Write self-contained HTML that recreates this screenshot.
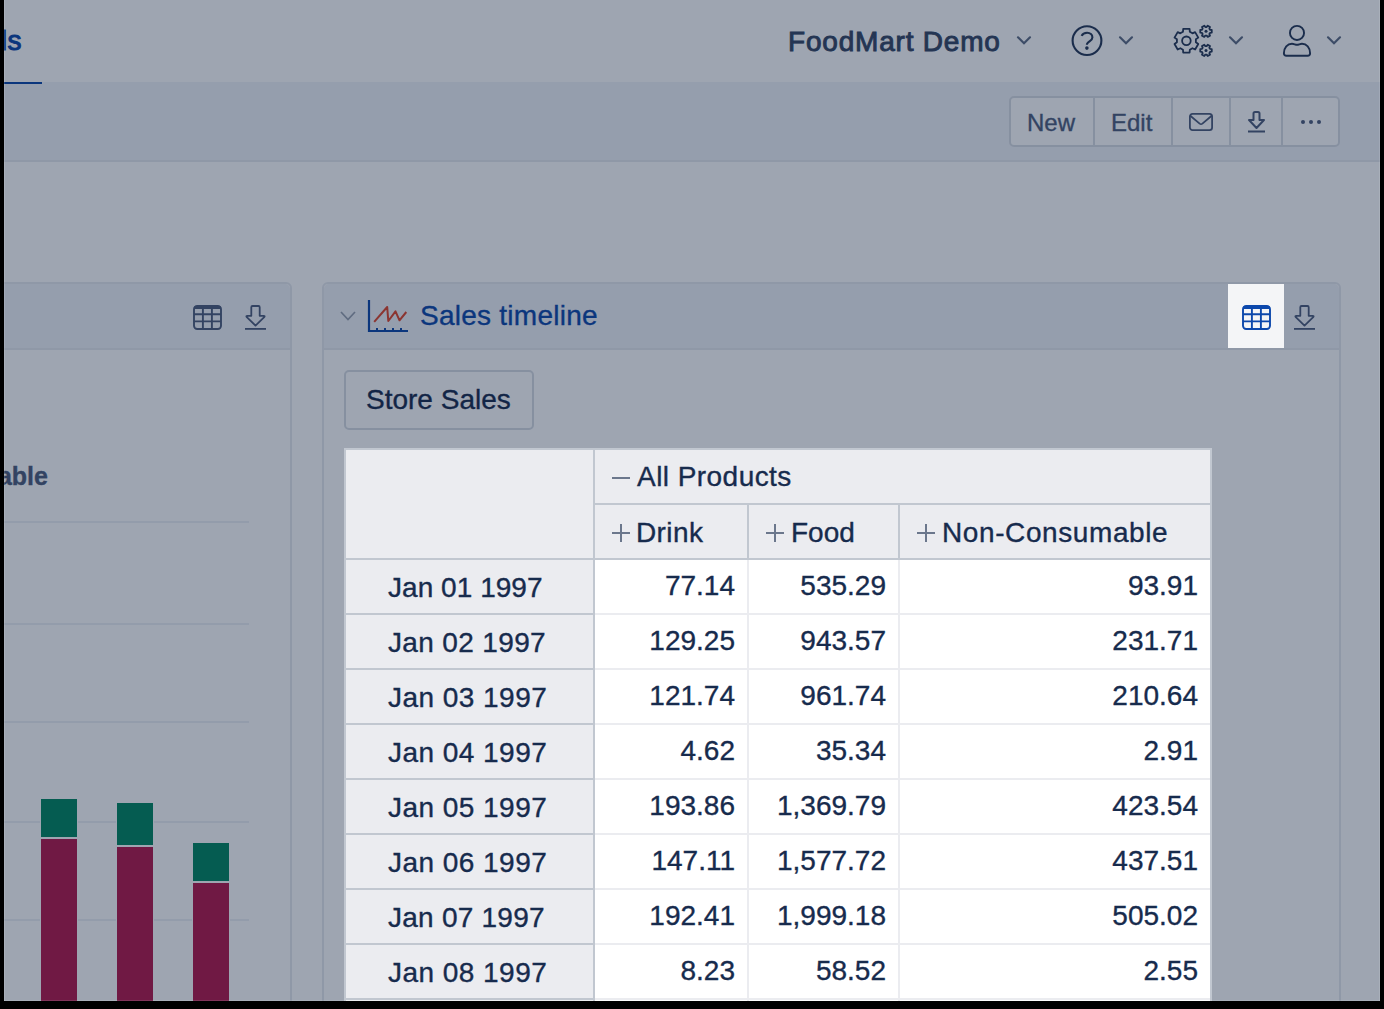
<!DOCTYPE html>
<html><head><meta charset="utf-8">
<style>
*{box-sizing:border-box;margin:0;padding:0}
html,body{width:1384px;height:1009px;overflow:hidden;background:#fff}
body{font-family:"Liberation Sans",sans-serif;color:#172B4D;position:relative}
.abs{position:absolute}
.ov{position:absolute;background:rgba(13,30,60,0.4)}
.t{position:absolute;white-space:nowrap;line-height:1;-webkit-text-stroke:0.35px currentColor}
svg{position:absolute;overflow:visible}
.btn{position:absolute;top:0;height:49px;border-right:2px solid #D8DCE3}
td,th{font-weight:normal}
</style></head><body>
  <!-- header -->
  <div class="t" style="left:-134px;top:27px;font-size:28px;letter-spacing:0.5px;-webkit-text-stroke:1px currentColor;color:#0A47A8">Dashboards</div>
  <div class="abs" style="left:0;top:82px;width:1384px;height:80px;background:#F1F3F8;border-bottom:2px solid #E6E9EF"></div>
  <div class="abs" style="left:0;top:82px;width:42px;height:2px;background:#0A47A8"></div>

  <div class="t" style="left:788px;top:28px;font-size:28px;letter-spacing:0.8px;-webkit-text-stroke:0.9px currentColor;color:#344563">FoodMart Demo</div>
  <svg style="left:1017px;top:35.6px" width="14" height="9" viewBox="0 0 14 9"><path d="M1 1.3 L7 7.3 L13 1.3" fill="none" stroke="#5E6C84" stroke-width="2.2" stroke-linecap="round"/></svg>

  <!-- help -->
  <svg style="left:1071px;top:25px" width="32" height="32" viewBox="0 0 32 32"><circle cx="16" cy="15.6" r="14.4" fill="none" stroke="#253858" stroke-width="2.1"/><path d="M10.6 10.9 C11.6 8.8 13.6 7.8 16.1 7.8 C19.2 7.8 21.4 9.8 21.4 12.4 C21.4 15.2 18.4 16.1 16.6 18 Q15.9 18.7 15.9 19.8" fill="none" stroke="#253858" stroke-width="2.1"/><circle cx="15.9" cy="23.1" r="1.8" fill="#253858"/></svg>
  <svg style="left:1119px;top:35.6px" width="14" height="9" viewBox="0 0 14 9"><path d="M1 1.3 L7 7.3 L13 1.3" fill="none" stroke="#5E6C84" stroke-width="2.2" stroke-linecap="round"/></svg>

  <!-- gears -->
  <svg style="left:1172px;top:24px" width="42" height="34" viewBox="0 0 42 34"><g fill="none" stroke="#253858" stroke-width="1.8" stroke-linejoin="round"><path d="M17.84 7.84 L17.58 4.92 L11.22 4.92 L10.96 7.84 L8.36 9.34 L5.70 8.10 L2.52 13.62 L4.92 15.30 L4.92 18.30 L2.52 19.98 L5.70 25.50 L8.36 24.26 L10.96 25.76 L11.22 28.68 L17.58 28.68 L17.84 25.76 L20.44 24.26 L23.10 25.50 L26.28 19.98 L23.88 18.30 L23.88 15.30 L26.28 13.62 L23.10 8.10 L20.44 9.34 Z"/><circle cx="14.4" cy="16.8" r="4.3"/><path d="M38.01 8.84 L39.75 8.63 L39.75 5.97 L38.01 5.76 L37.34 4.59 L38.02 2.99 L35.72 1.66 L34.67 3.05 L33.33 3.05 L32.28 1.66 L29.98 2.99 L30.66 4.59 L29.99 5.76 L28.25 5.97 L28.25 8.63 L29.99 8.84 L30.66 10.01 L29.98 11.61 L32.28 12.94 L33.33 11.55 L34.67 11.55 L35.72 12.94 L38.02 11.61 L37.34 10.01 Z"/><path d="M38.01 27.94 L39.75 27.73 L39.75 25.07 L38.01 24.86 L37.34 23.69 L38.02 22.09 L35.72 20.76 L34.67 22.15 L33.33 22.15 L32.28 20.76 L29.98 22.09 L30.66 23.69 L29.99 24.86 L28.25 25.07 L28.25 27.73 L29.99 27.94 L30.66 29.11 L29.98 30.71 L32.28 32.04 L33.33 30.65 L34.67 30.65 L35.72 32.04 L38.02 30.71 L37.34 29.11 Z"/></g><circle cx="34" cy="7.3" r="1.5" fill="#253858"/><circle cx="34" cy="26.4" r="1.5" fill="#253858"/></svg>
  <svg style="left:1229px;top:35.6px" width="14" height="9" viewBox="0 0 14 9"><path d="M1 1.3 L7 7.3 L13 1.3" fill="none" stroke="#5E6C84" stroke-width="2.2" stroke-linecap="round"/></svg>

  <!-- user -->
  <svg style="left:1282px;top:24px" width="30" height="34" viewBox="0 0 30 34"><circle cx="15" cy="8.9" r="7.05" fill="none" stroke="#253858" stroke-width="1.9"/><path d="M1.9 29.3 C1.9 23.5 5.5 19.8 10 19.8 C12 19.8 13.3 20.8 15 20.8 C16.7 20.8 18 19.8 20 19.8 C24.5 19.8 28.1 23.5 28.1 29.3 Q28.1 31.8 25.6 31.8 L4.4 31.8 Q1.9 31.8 1.9 29.3 Z" fill="none" stroke="#253858" stroke-width="1.9"/></svg>
  <svg style="left:1327px;top:35.6px" width="14" height="9" viewBox="0 0 14 9"><path d="M1 1.3 L7 7.3 L13 1.3" fill="none" stroke="#5E6C84" stroke-width="2.2" stroke-linecap="round"/></svg>

  <!-- toolbar -->
  <div class="abs" style="left:1009px;top:96px;width:331px;height:51px;background:#fff;border:2px solid #D8DCE3;border-radius:5px"></div>
  <div class="abs" style="left:1093px;top:97px;width:2px;height:49px;background:#D8DCE3"></div>
  <div class="abs" style="left:1171px;top:97px;width:2px;height:49px;background:#D8DCE3"></div>
  <div class="abs" style="left:1229px;top:97px;width:2px;height:49px;background:#D8DCE3"></div>
  <div class="abs" style="left:1281px;top:97px;width:2px;height:49px;background:#D8DCE3"></div>
  <div class="t" style="left:1027px;top:111px;font-size:24px;color:#4D5D7C">New</div>
  <div class="t" style="left:1111px;top:111px;font-size:24px;color:#4D5D7C">Edit</div>
  <svg style="left:1189px;top:113px" width="24" height="18" viewBox="0 0 24 18"><rect x="0.9" y="0.9" width="22.2" height="16.2" rx="2.6" fill="none" stroke="#4D5D7C" stroke-width="1.8"/><path d="M1.3 2.8 L10.6 10.6 Q12 11.7 13.4 10.6 L22.7 2.8" fill="none" stroke="#4D5D7C" stroke-width="1.8"/></svg>
  <svg style="left:1247px;top:111px" width="19" height="22" viewBox="0 0 19 22" class="dl"><path d="M6.5 9 L6.5 2.5 Q6.5 1 8 1 L11 1 Q12.5 1 12.5 2.5 L12.5 9 L17 9 L9.5 17 L2 9 Z" fill="none" stroke="#4D5D7C" stroke-width="2" stroke-linejoin="round"/><rect x="1" y="19.5" width="17" height="2" fill="#4D5D7C"/></svg>
  <div class="abs" style="left:1300.9px;top:119.7px;width:4.2px;height:4.2px;border-radius:50%;background:#4D5D7C"></div>
  <div class="abs" style="left:1308.9px;top:119.7px;width:4.2px;height:4.2px;border-radius:50%;background:#4D5D7C"></div>
  <div class="abs" style="left:1316.9px;top:119.7px;width:4.2px;height:4.2px;border-radius:50%;background:#4D5D7C"></div>

  <!-- left portlet -->
  <div class="abs" style="left:-20px;top:282px;width:312px;height:760px;border:2px solid #E6E9EF;border-radius:6px;background:#fff"></div>
  <div class="abs" style="left:-18px;top:284px;width:308px;height:66px;background:#F1F3F8;border-bottom:2px solid #E6E9EF;border-top-right-radius:5px"></div>
  <svg style="left:193px;top:305px" width="29" height="25" viewBox="0 0 29 25"><rect x="1" y="1" width="27" height="23" rx="3.2" fill="none" stroke="#4D5D7C" stroke-width="1.9"/><rect x="1.5" y="1" width="26" height="3" fill="#4D5D7C"/><path d="M1 9.2 H28 M1 16.4 H28 M9.9 1 V24 M18.9 1 V24" stroke="#4D5D7C" stroke-width="1.9"/></svg>
  <svg style="left:245px;top:305px" width="21" height="25" viewBox="0 0 21 25"><path d="M6.3 10.8 V2.2 Q6.3 1 7.5 1 H13.5 Q14.7 1 14.7 2.2 V10.8 H18.6 Q20.3 10.8 19.2 12.1 L10.5 20.6 L1.8 12.1 Q0.7 10.8 2.4 10.8 Z" fill="none" stroke="#4D5D7C" stroke-width="1.8" stroke-linejoin="round"/><rect x="0" y="23" width="21" height="1.8" fill="#4D5D7C"/></svg>
  <div class="t" style="left:-159px;top:464px;font-size:25px;font-weight:bold;color:#4D5D7C">Non-Consumable</div>
            <div class="abs" style="left:0;top:521px;width:249px;height:2px;background:#EDF0F5"></div>
  <div class="abs" style="left:0;top:623px;width:249px;height:2px;background:#EDF0F5"></div>
  <div class="abs" style="left:0;top:721px;width:249px;height:2px;background:#EDF0F5"></div>
  <div class="abs" style="left:0;top:821px;width:249px;height:2px;background:#EDF0F5"></div>
  <div class="abs" style="left:0;top:919px;width:249px;height:2px;background:#EDF0F5"></div>
  <!-- bars -->
  <div class="abs" style="left:41px;top:799px;width:36px;height:38px;background:#00855F;box-shadow:0 0 0 1px #fff"></div>
  <div class="abs" style="left:41px;top:839px;width:36px;height:200px;background:#B2164A;box-shadow:0 0 0 1px #fff"></div>
  <div class="abs" style="left:117px;top:803px;width:36px;height:42px;background:#00855F;box-shadow:0 0 0 1px #fff"></div>
  <div class="abs" style="left:117px;top:847px;width:36px;height:200px;background:#B2164A;box-shadow:0 0 0 1px #fff"></div>
  <div class="abs" style="left:193px;top:843px;width:36px;height:38px;background:#00855F;box-shadow:0 0 0 1px #fff"></div>
  <div class="abs" style="left:193px;top:883px;width:36px;height:200px;background:#B2164A;box-shadow:0 0 0 1px #fff"></div>

  <!-- right portlet -->
  <div class="abs" style="left:322px;top:282px;width:1019px;height:760px;border:2px solid #E6E9EF;border-radius:6px;background:#fff"></div>
  <div class="abs" style="left:324px;top:284px;width:1015px;height:66px;background:#F1F3F8;border-bottom:2px solid #E6E9EF;border-top-left-radius:5px;border-top-right-radius:5px"></div>
  <svg style="left:340px;top:311px" width="16" height="10" viewBox="0 0 16 10"><path d="M1 1 L8 8.5 L15 1" fill="none" stroke="#97A0AF" stroke-width="1.7"/></svg>
  <svg style="left:368px;top:300px" width="41" height="33" viewBox="0 0 41 33"><path d="M1 0 V31 H40" fill="none" stroke="#0A47A8" stroke-width="2.2"/><path d="M9 28 V30 M17 28 V30 M25 28 V30 M33 28 V30" stroke="#0A47A8" stroke-width="2"/><path d="M6.2 21.8 L19.2 7 L20.3 21 L27.5 11.3 L31.5 20.3 L38.3 12" fill="none" stroke="#E0452A" stroke-width="2" stroke-linejoin="round"/></svg>
  <div class="t" style="left:420px;top:302px;font-size:28px;letter-spacing:0.25px;color:#0A47A8">Sales timeline</div>
  <div class="abs" style="left:1228px;top:284px;width:56px;height:64px;background:#F4F5F7"></div>
  <svg style="left:1242px;top:305px" width="29" height="25" viewBox="0 0 29 25"><rect x="1" y="1" width="27" height="23" rx="3.2" fill="none" stroke="#0C48AC" stroke-width="1.9"/><rect x="1.5" y="1" width="26" height="3" fill="#0C48AC"/><path d="M1 9.2 H28 M1 16.4 H28 M9.9 1 V24 M18.9 1 V24" stroke="#0C48AC" stroke-width="1.9"/></svg>
  <svg style="left:1294px;top:305px" width="21" height="25" viewBox="0 0 21 25"><path d="M6.3 10.8 V2.2 Q6.3 1 7.5 1 H13.5 Q14.7 1 14.7 2.2 V10.8 H18.6 Q20.3 10.8 19.2 12.1 L10.5 20.6 L1.8 12.1 Q0.7 10.8 2.4 10.8 Z" fill="none" stroke="#4D5D7C" stroke-width="1.8" stroke-linejoin="round"/><rect x="0" y="23" width="21" height="1.8" fill="#4D5D7C"/></svg>

  <div class="abs" style="left:344px;top:370px;width:190px;height:60px;border:2px solid #D8DCE3;border-radius:5px;background:#fff"></div>
  <div class="t" style="left:366px;top:386px;font-size:28px;color:#172B4D">Store Sales</div>

  <!-- table -->
  <!--TBL-->
<div class="abs" style="left:344px;top:448px;width:868px;height:112px;background:#EBECF0"></div>
<div class="abs" style="left:344px;top:448px;width:251px;height:600px;background:#EBECF0"></div>
<div class="abs" style="left:595px;top:613px;width:615px;height:2px;background:#EBECF0"></div>
<div class="abs" style="left:595px;top:668px;width:615px;height:2px;background:#EBECF0"></div>
<div class="abs" style="left:595px;top:723px;width:615px;height:2px;background:#EBECF0"></div>
<div class="abs" style="left:595px;top:778px;width:615px;height:2px;background:#EBECF0"></div>
<div class="abs" style="left:595px;top:833px;width:615px;height:2px;background:#EBECF0"></div>
<div class="abs" style="left:595px;top:888px;width:615px;height:2px;background:#EBECF0"></div>
<div class="abs" style="left:595px;top:943px;width:615px;height:2px;background:#EBECF0"></div>
<div class="abs" style="left:595px;top:998px;width:615px;height:2px;background:#EBECF0"></div>
<div class="abs" style="left:595px;top:1053px;width:615px;height:2px;background:#EBECF0"></div>
<div class="abs" style="left:747px;top:560px;width:2px;height:500px;background:#EBECF0"></div>
<div class="abs" style="left:898px;top:560px;width:2px;height:500px;background:#EBECF0"></div>
<div class="abs" style="left:344px;top:448px;width:868px;height:2px;background:#C1C7D0"></div>
<div class="abs" style="left:344px;top:448px;width:2px;height:600px;background:#C1C7D0"></div>
<div class="abs" style="left:1210px;top:448px;width:2px;height:600px;background:#C1C7D0"></div>
<div class="abs" style="left:595px;top:503px;width:615px;height:2px;background:#C1C7D0"></div>
<div class="abs" style="left:344px;top:558px;width:868px;height:2px;background:#C1C7D0"></div>
<div class="abs" style="left:593px;top:448px;width:2px;height:600px;background:#C1C7D0"></div>
<div class="abs" style="left:747px;top:505px;width:2px;height:55px;background:#C1C7D0"></div>
<div class="abs" style="left:898px;top:505px;width:2px;height:55px;background:#C1C7D0"></div>
<div class="abs" style="left:346px;top:613px;width:247px;height:2px;background:#C1C7D0"></div>
<div class="abs" style="left:346px;top:668px;width:247px;height:2px;background:#C1C7D0"></div>
<div class="abs" style="left:346px;top:723px;width:247px;height:2px;background:#C1C7D0"></div>
<div class="abs" style="left:346px;top:778px;width:247px;height:2px;background:#C1C7D0"></div>
<div class="abs" style="left:346px;top:833px;width:247px;height:2px;background:#C1C7D0"></div>
<div class="abs" style="left:346px;top:888px;width:247px;height:2px;background:#C1C7D0"></div>
<div class="abs" style="left:346px;top:943px;width:247px;height:2px;background:#C1C7D0"></div>
<div class="abs" style="left:346px;top:998px;width:247px;height:2px;background:#C1C7D0"></div>
<div class="abs" style="left:346px;top:1053px;width:247px;height:2px;background:#C1C7D0"></div>
<div class="abs" style="left:612px;top:477px;width:18px;height:2px;background:#6B778C"></div>
<div class="t" style="left:637px;top:463px;font-size:28px;letter-spacing:0.45px">All Products</div>
<div class="abs" style="left:612px;top:532px;width:18px;height:2px;background:#6B778C"></div>
<div class="abs" style="left:620px;top:524px;width:2px;height:18px;background:#6B778C"></div>
<div class="t" style="left:636px;top:519px;font-size:28px;letter-spacing:0.4px">Drink</div>
<div class="abs" style="left:766px;top:532px;width:18px;height:2px;background:#6B778C"></div>
<div class="abs" style="left:774px;top:524px;width:2px;height:18px;background:#6B778C"></div>
<div class="t" style="left:791px;top:519px;font-size:28px">Food</div>
<div class="abs" style="left:917px;top:532px;width:18px;height:2px;background:#6B778C"></div>
<div class="abs" style="left:925px;top:524px;width:2px;height:18px;background:#6B778C"></div>
<div class="t" style="left:942px;top:519px;font-size:28px;letter-spacing:0.6px">Non-Consumable</div>
<div class="t" style="left:388px;top:574px;font-size:28px;letter-spacing:0.04px">Jan 01 1997</div>
<div class="t" style="right:649px;top:572px;font-size:28px">77.14</div>
<div class="t" style="right:498px;top:572px;font-size:28px">535.29</div>
<div class="t" style="right:186px;top:572px;font-size:28px">93.91</div>
<div class="t" style="left:388px;top:629px;font-size:28px;letter-spacing:0.35px">Jan 02 1997</div>
<div class="t" style="right:649px;top:627px;font-size:28px">129.25</div>
<div class="t" style="right:498px;top:627px;font-size:28px">943.57</div>
<div class="t" style="right:186px;top:627px;font-size:28px">231.71</div>
<div class="t" style="left:388px;top:684px;font-size:28px;letter-spacing:0.46px">Jan 03 1997</div>
<div class="t" style="right:649px;top:682px;font-size:28px">121.74</div>
<div class="t" style="right:498px;top:682px;font-size:28px">961.74</div>
<div class="t" style="right:186px;top:682px;font-size:28px">210.64</div>
<div class="t" style="left:388px;top:739px;font-size:28px;letter-spacing:0.46px">Jan 04 1997</div>
<div class="t" style="right:649px;top:737px;font-size:28px">4.62</div>
<div class="t" style="right:498px;top:737px;font-size:28px">35.34</div>
<div class="t" style="right:186px;top:737px;font-size:28px">2.91</div>
<div class="t" style="left:388px;top:794px;font-size:28px;letter-spacing:0.46px">Jan 05 1997</div>
<div class="t" style="right:649px;top:792px;font-size:28px">193.86</div>
<div class="t" style="right:498px;top:792px;font-size:28px">1,369.79</div>
<div class="t" style="right:186px;top:792px;font-size:28px">423.54</div>
<div class="t" style="left:388px;top:849px;font-size:28px;letter-spacing:0.46px">Jan 06 1997</div>
<div class="t" style="right:649px;top:847px;font-size:28px">147.11</div>
<div class="t" style="right:498px;top:847px;font-size:28px">1,577.72</div>
<div class="t" style="right:186px;top:847px;font-size:28px">437.51</div>
<div class="t" style="left:388px;top:904px;font-size:28px;letter-spacing:0.24px">Jan 07 1997</div>
<div class="t" style="right:649px;top:902px;font-size:28px">192.41</div>
<div class="t" style="right:498px;top:902px;font-size:28px">1,999.18</div>
<div class="t" style="right:186px;top:902px;font-size:28px">505.02</div>
<div class="t" style="left:388px;top:959px;font-size:28px;letter-spacing:0.46px">Jan 08 1997</div>
<div class="t" style="right:649px;top:957px;font-size:28px">8.23</div>
<div class="t" style="right:498px;top:957px;font-size:28px">58.52</div>
<div class="t" style="right:186px;top:957px;font-size:28px">2.55</div>
<div class="t" style="left:388px;top:1014px;font-size:28px;letter-spacing:0.46px">Jan 09 1997</div>
<div class="t" style="right:649px;top:1012px;font-size:28px">121.32</div>
<div class="t" style="right:498px;top:1012px;font-size:28px">1,134.63</div>
<div class="t" style="right:186px;top:1012px;font-size:28px">301.77</div>
<!--/TBL-->

<!-- overlay -->
<div class="ov" style="left:0;top:0;width:1384px;height:284px"></div>
<div class="ov" style="left:0;top:284px;width:1228px;height:64px"></div>
<div class="ov" style="left:1284px;top:284px;width:100px;height:64px"></div>
<div class="ov" style="left:0;top:348px;width:1384px;height:100px"></div>
<div class="ov" style="left:0;top:448px;width:344px;height:561px"></div>
<div class="ov" style="left:1212px;top:448px;width:172px;height:561px"></div>
<!-- frame -->
<div class="abs" style="left:4px;top:0;width:1px;height:1001px;background:rgba(255,255,255,0.12)"></div>
<div class="abs" style="left:1379px;top:0;width:1px;height:1001px;background:rgba(255,255,255,0.12)"></div>
<div class="abs" style="left:4px;top:1000px;width:1376px;height:1px;background:rgba(255,255,255,0.12)"></div>
<div class="abs" style="left:0;top:0;width:4px;height:1009px;background:#000"></div>
<div class="abs" style="left:1380px;top:0;width:4px;height:1009px;background:#000"></div>
<div class="abs" style="left:0;top:1001px;width:1384px;height:8px;background:#000"></div>
</body></html>
